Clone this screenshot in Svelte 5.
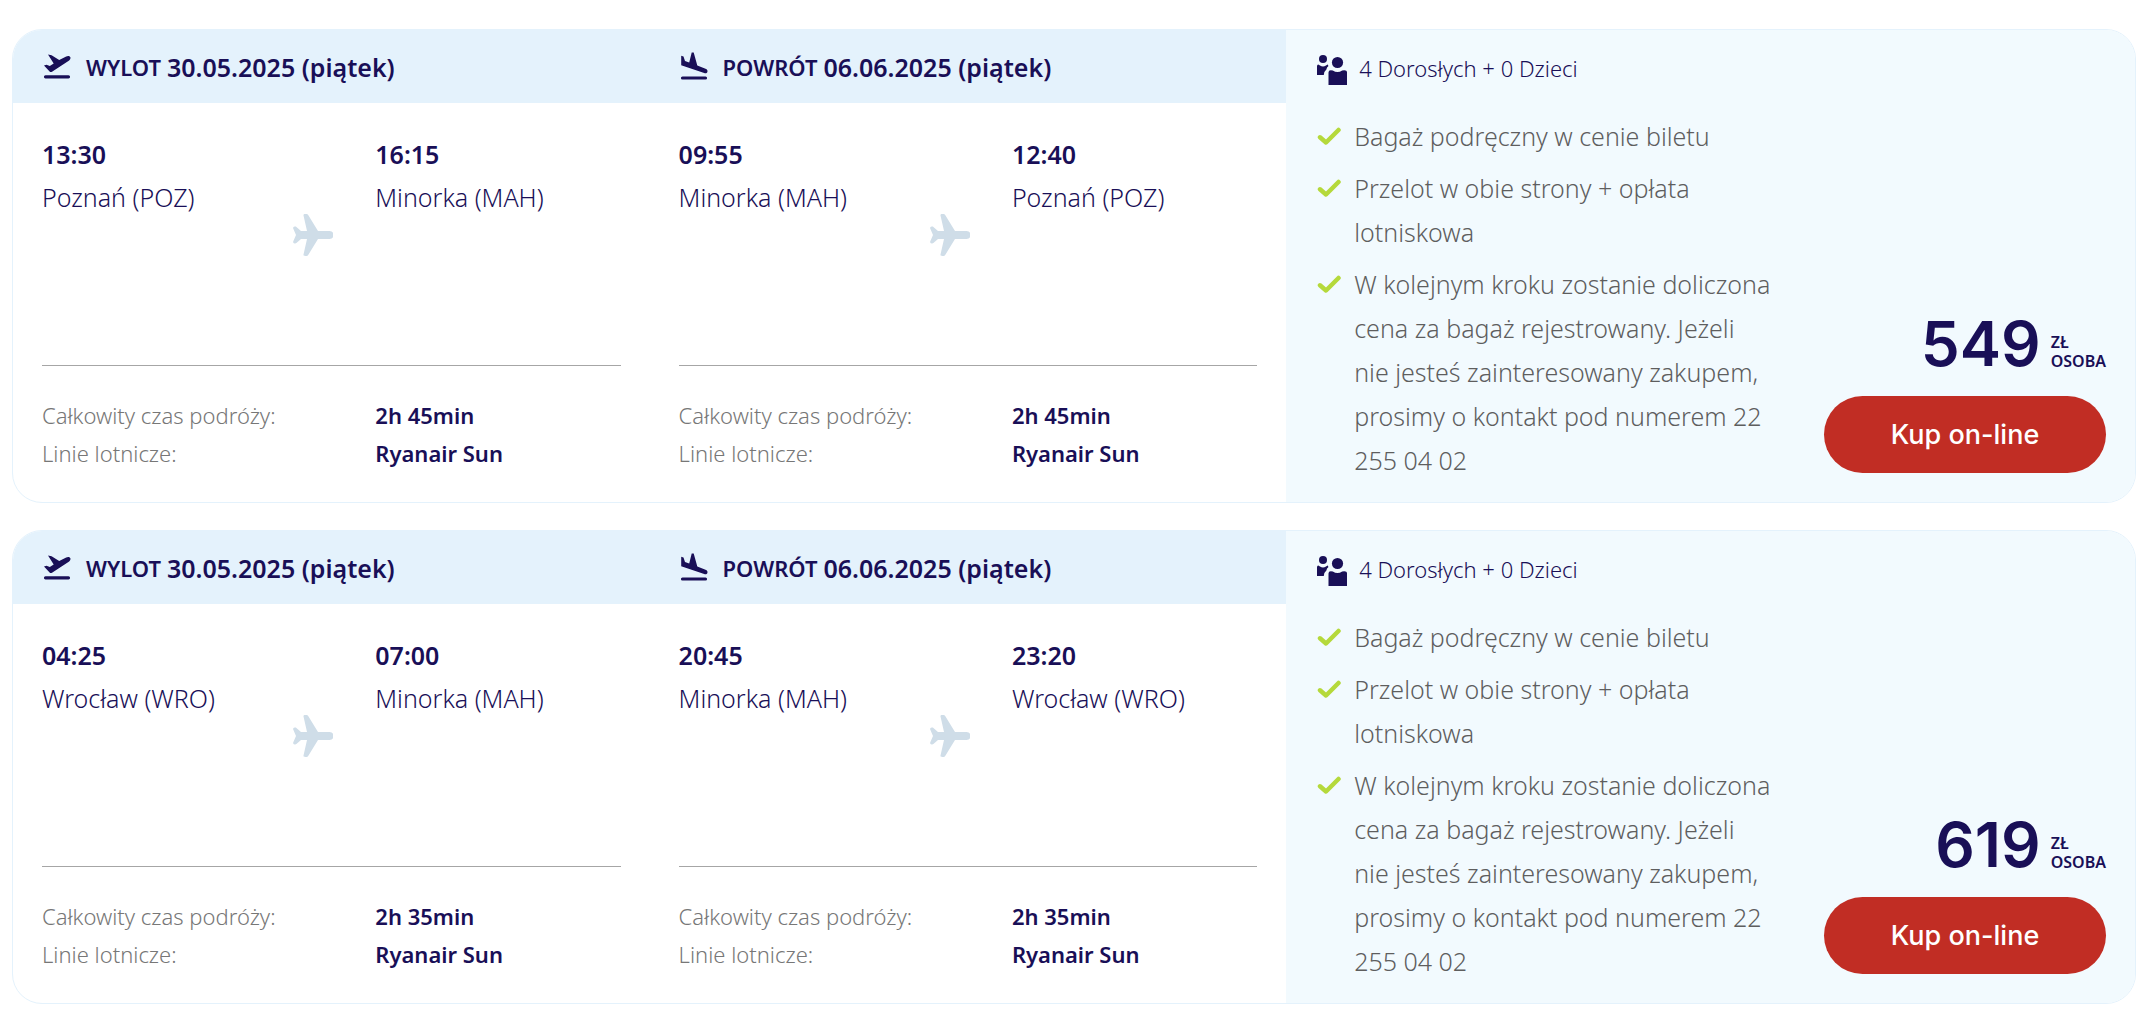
<script>
  const perks = [
    'Bagaż podręczny w cenie biletu',
    'Przelot w obie strony + opłata lotniskowa',
    'W kolejnym kroku zostanie doliczona cena za bagaż rejestrowany. Jeżeli nie jesteś zainteresowany zakupem, prosimy o kontakt pod numerem 22 255 04 02'
  ];

  const minorka = 'Minorka (MAH)';

  const offers = [
    {
      price: 549,
      legs: [
        { kind: 'out', label: 'WYLOT', date: '30.05.2025 (piątek)', from: ['13:30', 'Poznań (POZ)'], to: ['16:15', minorka], time: '2h 45min' },
        { kind: 'back', label: 'POWRÓT', date: '06.06.2025 (piątek)', from: ['09:55', minorka], to: ['12:40', 'Poznań (POZ)'], time: '2h 45min' }
      ]
    },
    {
      price: 619,
      legs: [
        { kind: 'out', label: 'WYLOT', date: '30.05.2025 (piątek)', from: ['04:25', 'Wrocław (WRO)'], to: ['07:00', minorka], time: '2h 35min' },
        { kind: 'back', label: 'POWRÓT', date: '06.06.2025 (piątek)', from: ['20:45', minorka], to: ['23:20', 'Wrocław (WRO)'], time: '2h 35min' }
      ]
    }
  ];
</script>

<main class="offers">
  {#each offers as offer}
    <article class="card">
      <div class="legs">
        {#each offer.legs as leg}
          <section class="leg">
            <h2 class="leg-head">
              {#if leg.kind === 'out'}
                <svg class="head-icon" viewBox="0 0 32 32" aria-hidden="true">
                  <path d="M3.500 24.200h23a1.500 1.500 0 0 1 0 3.200h-23a1.500 1.500 0 0 1 0-3.200z" />
                  <path d="M6 3.500l3.600.8 7.600 4.800 7-3.700c1.700-.9 3.500-.6 4.100.7.600 1.400-.200 2.700-1.500 3.700L10 20.800c-.8.500-1.700.4-2.400-.3L2 14.500l2.500-.7 3.300 1.300 3.900-2.500z" />
                </svg>
              {:else}
                <svg class="head-icon" viewBox="0 0 32 32" aria-hidden="true">
                  <path d="M3.500 25.400h23a1.500 1.500 0 0 1 0 3.200h-23a1.500 1.500 0 0 1 0-3.200z" />
                  <path d="M2.200 4.800l2.300.7 1.500 4.400 4.200 1.500L12.700 1.500h2l3.600 13.100 8.200 3.200c1.700.7 2.300 1.900 1.900 3.100-.4 1.300-1.700 1.700-3.200 1.200L2.200 14.300z" />
                </svg>
              {/if}
              <span class="leg-name">{leg.label}</span>
              <span class="leg-date">{leg.date}</span>
            </h2>
            <div class="leg-body">
              <div class="route">
                <div>
                  <p class="hour">{leg.from[0]}</p>
                  <p class="city">{leg.from[1]}</p>
                </div>
                <svg class="plane" viewBox="0 0 40 42" aria-hidden="true">
                  <path d="M10.500 1.500C10.300.5 11 0 12 0h1.500c.8 0 1.300.400 1.700 1.100L25 17h11.500a4 4 0 0 1 0 8H25l-9.800 15.900c-.4.700-.9 1.100-1.700 1.100H12c-1 0-1.700-.5-1.500-1.500L14 25H8l-4.600 4c-.5.4-1 .5-1.700.4C.5 29.200 0 28.500.200 27.600L3 21 .200 14.400c-.2-.9.300-1.600 1.500-1.800.7-.1 1.200 0 1.700.4L8 17h6z" />
                </svg>
                <div>
                  <p class="hour">{leg.to[0]}</p>
                  <p class="city">{leg.to[1]}</p>
                </div>
              </div>
              <dl class="facts">
                <dt>Całkowity czas podróży:</dt>
                <dd>{leg.time}</dd>
                <dt>Linie lotnicze:</dt>
                <dd>Ryanair Sun</dd>
              </dl>
            </div>
          </section>
        {/each}
      </div>

      <aside class="summary">
        <div class="info">
          <p class="people">
            <svg class="people-icon" viewBox="0 0 30 30" aria-hidden="true">
              <circle cx="6" cy="4" r="4" />
              <path d="M0 20v-8.500Q0 9.500 1.200 9.500L3 10.500q3 1.800 6 0l1.500-1q.8 0 .8 1.800-1.600 1-1.900 3.200-2.400 1.800-2.600 5.500z" />
              <circle cx="20.500" cy="7.500" r="5.600" />
              <path d="M11.500 30V17.500q0-2.300 2.300-2.300l2 .3q4.700 3.200 9.400 0l2-.3q2.800 0 2.800 2.300V30z" />
            </svg>
            4 Dorosłych + 0 Dzieci
          </p>
          <ul class="perks">
            {#each perks as perk}
              <li>
                <svg class="check" viewBox="0 0 24 20" aria-hidden="true">
                  <path d="M3 11.300l6 5.200L21.500 4" />
                </svg>
                <span>{perk}</span>
              </li>
            {/each}
          </ul>
        </div>
        <div class="buy">
          <p class="price">
            <strong>{offer.price}</strong>
            <span class="unit">ZŁ<br />OSOBA</span>
          </p>
          <button type="button">Kup on-line</button>
        </div>
      </aside>
    </article>
  {/each}
</main>

<style>
  :global(body) {
    margin: 0;
    background: #fff;
  }

  p,
  h2,
  dl,
  dd,
  ul {
    margin: 0;
    padding: 0;
  }

  .offers {
    display: flex;
    flex-direction: column;
    gap: 27px;
    padding: 29px 18px 8px 12px;
    font-family: 'Noto Sans', 'Open Sans', sans-serif;
    font-weight: 300;
    color: #190f57;
  }

  .card {
    display: grid;
    grid-template-columns: 3fr 2fr;
    border: 1px solid #e4f2fc;
    border-radius: 30px;
    overflow: hidden;
  }

  .legs {
    display: grid;
    grid-template-columns: 1fr 1fr;
  }

  .leg {
    display: flex;
    flex-direction: column;
  }

  .leg-head {
    display: flex;
    align-items: center;
    height: 73px;
    padding: 0 29px;
    background: #e4f2fc;
    font-size: 25px;
    font-weight: 600;
    line-height: 38px;
  }

  .head-icon {
    width: 32px;
    height: 32px;
    margin-right: 12px;
    fill: currentColor;
  }

  .leg-name {
    margin-right: 6px;
    font-size: 22px;
  }

  .leg-body {
    flex: 1;
    display: flex;
    flex-direction: column;
    padding: 30px 29px;
  }

  .route {
    flex: 1;
    display: grid;
    grid-template-columns: 1fr 88px 1fr;
    border-bottom: 1px solid #a6a6a6;
  }

  .hour,
  .city {
    font-size: 25px;
    line-height: 43px;
  }

  .hour {
    font-weight: 600;
  }

  .plane {
    width: 40px;
    height: 42px;
    margin: 81px 0 0 6px;
    fill: #cfdde8;
  }

  .facts {
    display: grid;
    grid-template-columns: 1fr 88px 1fr;
    padding-top: 30px;
    font-size: 22px;
    line-height: 38px;
  }

  .facts dt {
    grid-column: 1 / 3;
    color: #777;
  }

  .facts dd {
    font-weight: 600;
  }

  .summary {
    display: flex;
    gap: 52px;
    padding: 18px 29px 20px 31px;
    background: #f2fafe;
  }

  .info {
    flex: 1;
  }

  .people {
    display: flex;
    align-items: center;
    gap: 12px;
    font-size: 22px;
    line-height: 40px;
  }

  .people-icon {
    width: 30px;
    height: 30px;
    margin-top: 4px;
    fill: currentColor;
  }

  .perks {
    display: flex;
    flex-direction: column;
    gap: 8px;
    padding-top: 26px;
    list-style: none;
    font-size: 25px;
    line-height: 44px;
    color: #5e5e5e;
  }

  .perks li {
    display: flex;
    gap: 13px;
  }

  .check {
    flex: none;
    width: 24px;
    height: 20px;
    margin-top: 12px;
    fill: none;
    stroke: #b5d93b;
    stroke-width: 4.500;
    stroke-linecap: round;
    stroke-linejoin: round;
  }

  .buy {
    flex: none;
    display: flex;
    flex-direction: column;
    justify-content: flex-end;
    width: 282px;
    padding-bottom: 9px;
  }

  .price {
    display: flex;
    justify-content: flex-end;
    gap: 10px;
    padding-bottom: 20px;
  }

  .price strong {
    font-family: Inter, sans-serif;
    font-size: 62px;
    font-weight: 600;
    line-height: 64px;
  }

  .unit {
    align-self: flex-end;
    padding-bottom: 5px;
    font-size: 16px;
    font-weight: 600;
    line-height: 19px;
  }

  button {
    height: 77px;
    border: 0;
    border-radius: 39px;
    background: #c12d24;
    color: #fff;
    font-family: Inter, sans-serif;
    font-size: 27px;
    font-weight: 500;
    cursor: pointer;
  }
</style>
